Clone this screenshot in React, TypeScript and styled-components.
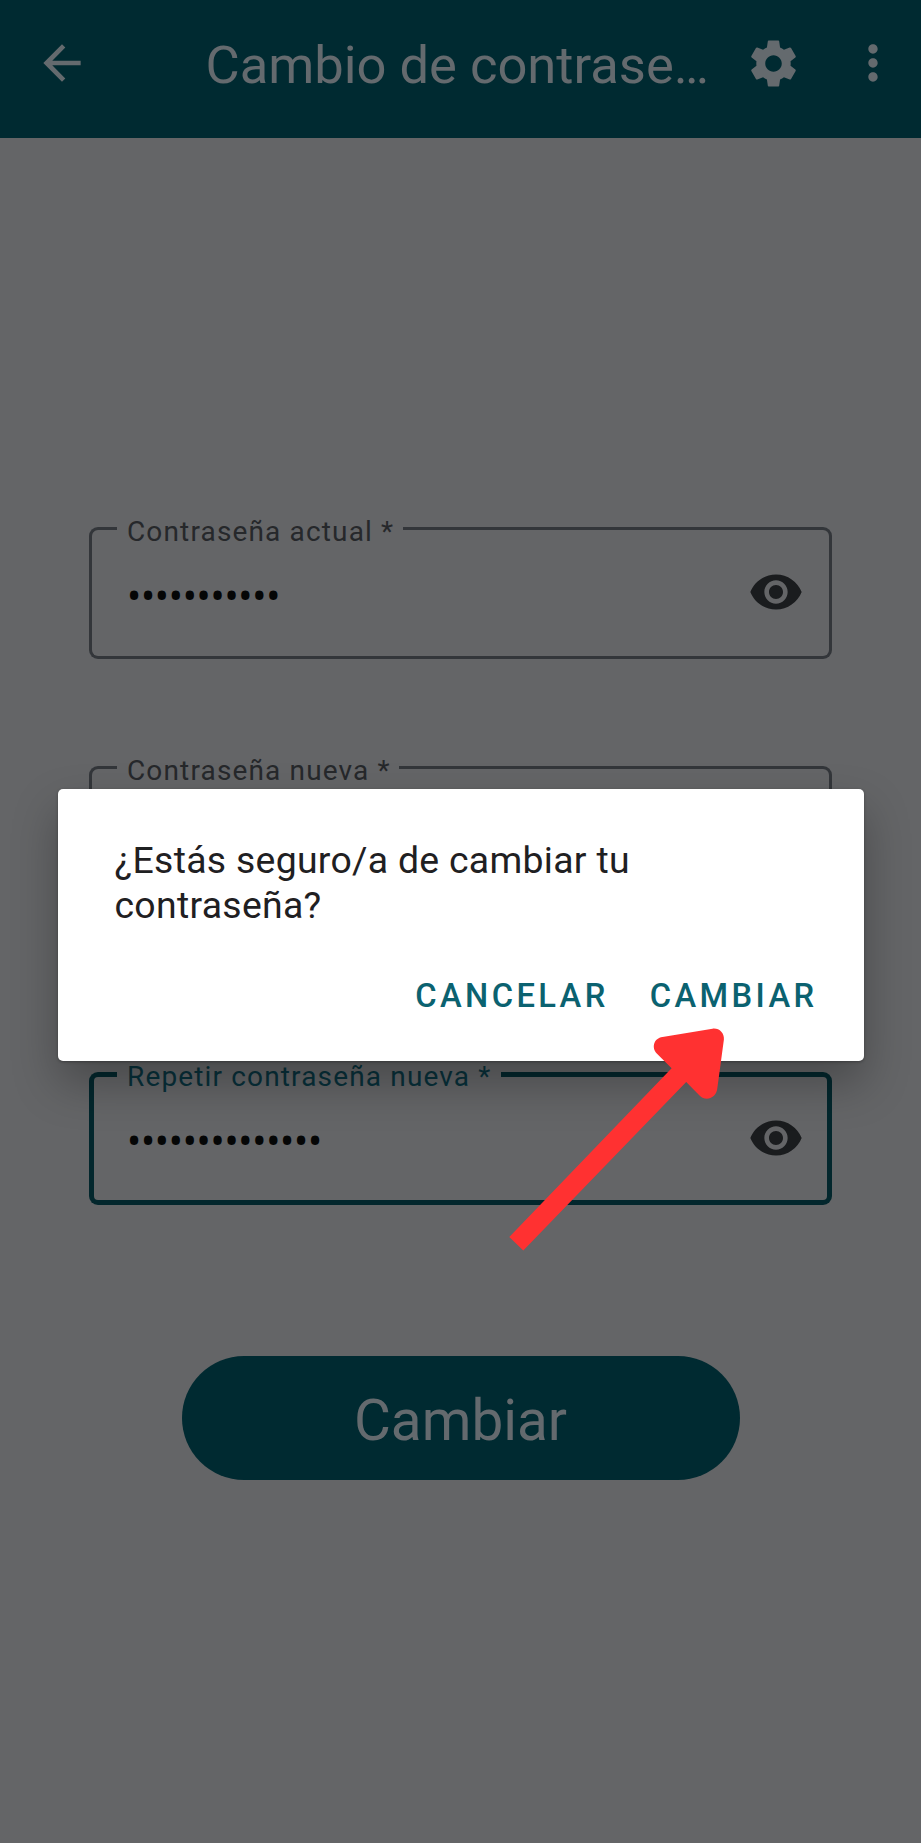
import React from "react";
import styled, { createGlobalStyle } from "styled-components";
import { MdArrowBack, MdMoreVert, MdVisibility } from "react-icons/md";

const color = {
  page: "#646567",
  bar: "#002a31",
  barText: "#646a6e",
  outline: "#33363a",
  label: "#26282b",
  focus: "#03272d",
  focusLabel: "#08303a",
  icon: "#1a1c1e",
  accent: "#0b6270",
};

const GlobalStyle = createGlobalStyle`
  * { box-sizing: border-box; }
  body { margin: 0; background: ${color.page}; font-family: Roboto, "Liberation Sans", sans-serif; }
`;

const Screen = styled.div`
  position: relative;
  width: 921px;
  height: 1843px;
  overflow: hidden;
  background: ${color.page};
`;

const AppBar = styled.header`
  display: flex;
  align-items: center;
  height: 138px;
  padding: 0 20px 12px 34px;
  color: ${color.barText};
  background: ${color.bar};
`;

const Title = styled.h1`
  flex: 1;
  margin: 4px 0 0;
  padding-left: 115.5px;
  font-size: 52.5px;
  font-weight: 400;
  line-height: 64px;
  white-space: nowrap;
`;

const BarIcon = styled.span<{ $gap?: number }>`
  display: flex;
  margin-right: ${(p) => p.$gap ?? 0}px;
`;

const Form = styled.main`
  display: flex;
  flex-direction: column;
  padding: 389px 89px 0;
`;

const FieldBox = styled.div<{ $focused?: boolean; $after: number }>`
  display: grid;
  width: 743px;
  height: ${(p) => (p.$focused ? 133 : 132)}px;
  margin-bottom: ${(p) => p.$after}px;
  --line: ${(p) => (p.$focused ? `5px solid ${color.focus}` : `3px solid ${color.outline}`)};
  --label: ${(p) => (p.$focused ? color.focusLabel : color.label)};

  > * { grid-area: 1 / 1; }
`;

const Outline = styled.div`
  display: flex;
`;

const OutlineStart = styled.div`
  width: 28px;
  border: var(--line);
  border-right: 0;
  border-radius: 9px 0 0 9px;
`;

const Notch = styled.label<{ $width: number }>`
  width: ${(p) => p.$width}px;
  padding-left: 10px;
  margin-top: -12px;
  border-bottom: var(--line);
  color: var(--label);
  font-size: 28px;
  line-height: 33px;
  letter-spacing: 1.15px;
  white-space: nowrap;
`;

const OutlineEnd = styled.div`
  flex: 1;
  border: var(--line);
  border-left: 0;
  border-radius: 0 9px 9px 0;
`;

const FieldContent = styled.div`
  display: flex;
  align-items: center;
  justify-content: space-between;
  padding: 0 28px 2px 38px;
  color: ${color.icon};
`;

const Bullets = styled.span`
  margin-top: 5px;
  color: #050606;
  font-family: "Noto Sans", Roboto, sans-serif;
  font-size: 37.5px;
  line-height: 44px;
  letter-spacing: -0.18px;
`;

const SubmitButton = styled.button`
  align-self: center;
  width: 558px;
  height: 124px;
  padding: 5px 0 0;
  border: 0;
  border-radius: 62px;
  color: ${color.barText};
  background: ${color.bar};
  font: 400 56.7px/66px Roboto, "Liberation Sans", sans-serif;
`;

const Overlay = styled.div`
  position: absolute;
  inset: 0;
  display: flex;
  align-items: flex-start;
  justify-content: center;
  padding-top: 789px;
`;

const Dialog = styled.section`
  display: flex;
  flex-direction: column;
  justify-content: space-between;
  width: 806px;
  height: 272px;
  padding: 49px 46px 46px 57px;
  border-radius: 5px;
  background: #fff;
  box-shadow: 0 22px 46px rgba(0, 0, 0, 0.28), 0 1px 3px rgba(0, 0, 0, 0.3);
`;

const Message = styled.p`
  width: 560px;
  margin: 0;
  color: #1f2022;
  font-size: 37.4px;
  line-height: 45px;
  letter-spacing: 0.29px;
`;

const Actions = styled.div`
  display: flex;
  justify-content: flex-end;
  gap: 41px;
`;

const ActionButton = styled.button`
  padding: 0;
  border: 0;
  background: none;
  color: ${color.accent};
  font: 500 32.7px/38px Roboto, "Liberation Sans", sans-serif;
  letter-spacing: 3.4px;
`;

const Pointer = styled.svg`
  position: absolute;
  left: 500px;
  top: 1020px;
`;

function GearIcon() {
  return (
    <svg width="55" height="55" viewBox="0 0 24 24" fill="currentColor">
      <path d="M19.43 12.98c.04-.32.07-.64.07-.98s-.03-.66-.07-.98l2.11-1.65c.19-.15.24-.42.12-.64l-2-3.46c-.12-.22-.39-.3-.61-.22l-2.49 1c-.52-.4-1.08-.73-1.69-.98l-.38-2.65C14.46 2.18 14.25 2 14 2h-4c-.25 0-.46.18-.49.42l-.38 2.65c-.61.25-1.17.59-1.69.98l-2.49-1c-.23-.09-.49 0-.61.22l-2 3.46c-.13.22-.07.49.12.64l2.11 1.65c-.04.32-.07.65-.07.98s.03.66.07.98l-2.11 1.65c-.19.15-.24.42-.12.64l2 3.46c.12.22.39.3.61.22l2.49-1c.52.4 1.08.73 1.69.98l.38 2.65c.03.24.24.42.49.42h4c.25 0 .46-.18.49-.42l.38-2.65c.61-.25 1.17-.59 1.69-.98l2.49 1c.23.09.49 0 .61-.22l2-3.46c.12-.22.07-.49-.12-.64l-2.11-1.65zM12 15.6c-1.98 0-3.6-1.62-3.6-3.6s1.62-3.6 3.6-3.6 3.6 1.62 3.6 3.6-1.62 3.6-3.6 3.6z" />
    </svg>
  );
}

type FieldProps = {
  label: string;
  notch: number;
  length?: number;
  after: number;
  focused?: boolean;
};

function PasswordField({ label, notch, length = 0, after, focused }: FieldProps) {
  return (
    <FieldBox $focused={focused} $after={after}>
      <Outline>
        <OutlineStart />
        <Notch $width={notch}>{label}</Notch>
        <OutlineEnd />
      </Outline>
      <FieldContent>
        <Bullets>{"•".repeat(length)}</Bullets>
        <MdVisibility size={56} />
      </FieldContent>
    </FieldBox>
  );
}

export default function App() {
  return (
    <>
      <GlobalStyle />
      <Screen>
        <AppBar>
          <BarIcon><MdArrowBack size={56} /></BarIcon>
          <Title>Cambio de contrase…</Title>
          <BarIcon $gap={44}><GearIcon /></BarIcon>
          <BarIcon><MdMoreVert size={56} /></BarIcon>
        </AppBar>
        <Form>
          <PasswordField label="Contraseña actual *" notch={286} length={11} after={107} />
          <PasswordField label="Contraseña nueva *" notch={282} after={174} />
          <PasswordField label="Repetir contraseña nueva *" notch={384} length={14} after={151} focused />
          <SubmitButton>Cambiar</SubmitButton>
        </Form>
        <Overlay>
          <Dialog>
            <Message>¿Estás seguro/a de cambiar tu contraseña?</Message>
            <Actions>
              <ActionButton>CANCELAR</ActionButton>
              <ActionButton>CAMBIAR</ActionButton>
            </Actions>
          </Dialog>
        </Overlay>
        <Pointer width="240" height="240" viewBox="500 1020 240 240">
          <path
            fill="#ff3131"
            d="M509.3 1237 L671.6 1068.3 L657 1053.8 C651 1047.5 654 1038 662.5 1037 L712.5 1028.7 C719 1027.8 724.5 1033 723.9 1039.5 L717.3 1088.5 C716.3 1098 706 1102 699.5 1095.5 L686.2 1082 L523.3 1250.4 Z"
          />
        </Pointer>
      </Screen>
    </>
  );
}
